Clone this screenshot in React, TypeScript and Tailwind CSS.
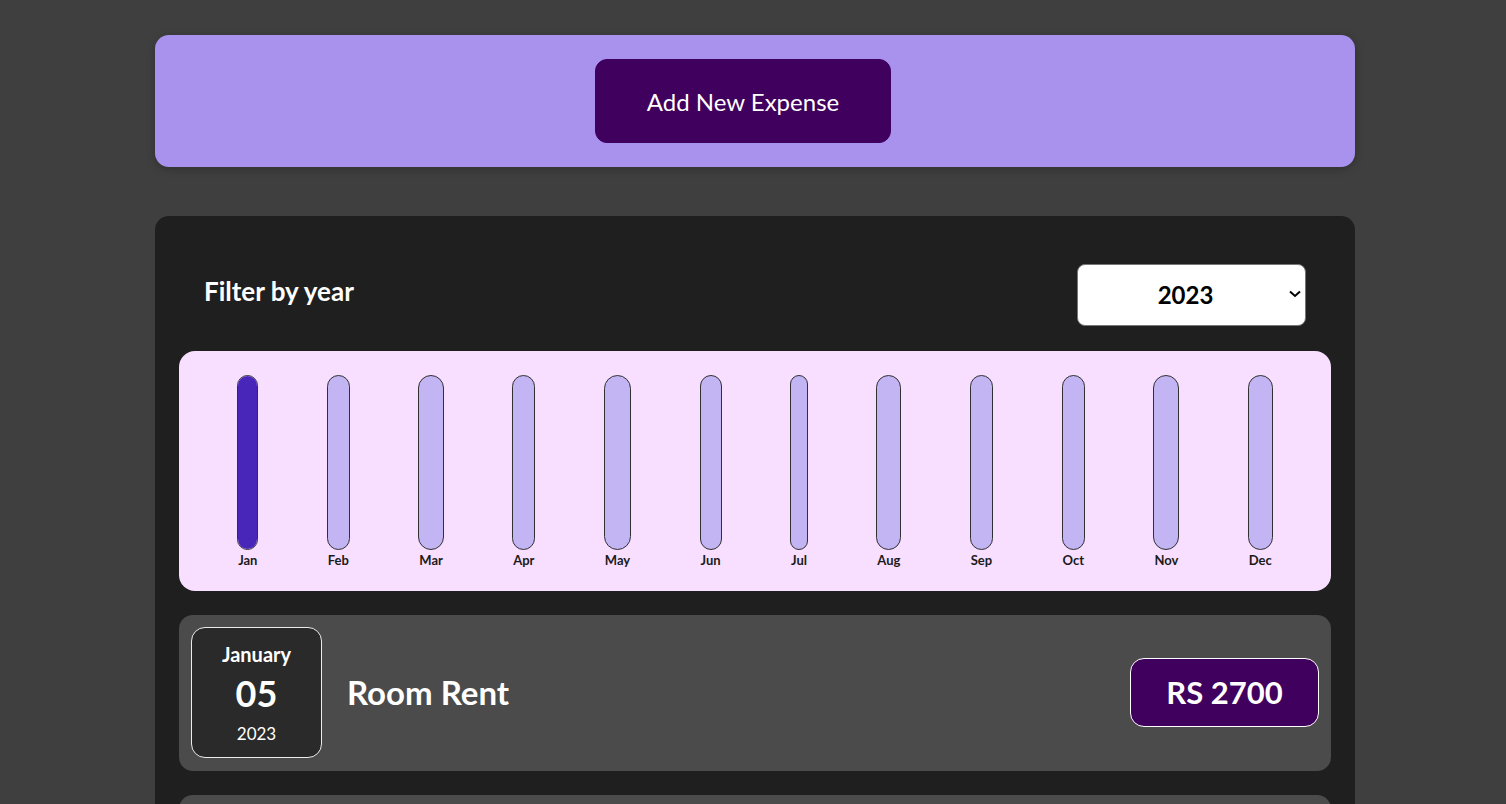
const months = ["Jan", "Feb", "Mar", "Apr", "May", "Jun", "Jul", "Aug", "Sep", "Oct", "Nov", "Dec"];
const values = [2700, 0, 0, 0, 0, 0, 0, 0, 0, 0, 0, 0];

function ChartBar({ label, fill }: { label: string; fill: number }) {
  return (
    <div className="flex flex-col items-center">
      <div className="flex h-[175px] w-full flex-col justify-end overflow-hidden rounded-full border border-[#313131] bg-[#c3b4f3]">
        <div className="w-full bg-[#4826b9]" style={{ height: `${fill}%` }} />
      </div>
      <div className="mt-[2px] px-[1px] text-[13px] font-bold leading-[16px] text-[#1a1a1a]">{label}</div>
    </div>
  );
}

function Chart() {
  const max = Math.max(...values);
  return (
    <div className="flex justify-around rounded-[16px] bg-[#f8dfff] px-6 pt-6 pb-[23px]">
      {months.map((m, i) => (
        <ChartBar key={m} label={m} fill={max ? (values[i] / max) * 100 : 0} />
      ))}
    </div>
  );
}

function ExpenseItem() {
  return (
    <div className="flex items-center rounded-[14px] bg-[#4b4b4b] px-3 pt-3 pb-[13px]">
      <div className="flex h-[131px] w-[131px] flex-col items-center rounded-[14px] border border-[#ececec] bg-[#2a2a2a] pt-[14px] text-white">
        <div className="text-[20px] font-bold leading-[24px]">January</div>
        <div className="mt-[7px] text-[36px] font-bold leading-[40px]">05</div>
        <div className="mt-[9px] text-[17px] leading-[24px]">2023</div>
      </div>
      <h2 className="ml-[25px] flex-1 text-[33px] font-bold text-white">Room Rent</h2>
      <div className="flex h-[69px] w-[189px] items-center justify-center rounded-[14px] border border-white bg-[#40005d] text-[31px] font-bold text-white">
        RS 2700
      </div>
    </div>
  );
}

export default function App() {
  return (
    <div className="min-h-[804px] bg-[#3f3f3f] pt-[35px]" style={{ fontFamily: "Lato, 'Open Sans', sans-serif" }}>
      <div className="ml-[155px] flex w-[1200px] justify-center rounded-[14px] bg-[#a892ee] py-6 shadow-[0_2px_8px_rgba(0,0,0,0.25)]">
        <button className="mr-6 h-[84px] w-[296px] rounded-[12px] border border-[#40005d] bg-[#40005d] pt-[2px] text-[24px] text-white">
          Add New Expense
        </button>
      </div>

      <div className="ml-[155px] mt-[49px] w-[1200px] rounded-[14px] bg-[#1f1f1f] px-6 pt-[48px] pb-6">
        <div className="flex items-center justify-between px-[25px]">
          <label className="-mt-[8px] text-[26px] font-bold text-white">Filter by year</label>
          <div className="relative">
            <select className="h-[62px] w-[229px] appearance-none rounded-[8px] border border-[#767676] bg-white pr-[12px] text-center text-[24px] font-bold text-black">
              <option>2023</option>
              <option>2022</option>
              <option>2021</option>
            </select>
            <svg className="pointer-events-none absolute right-[4px] top-[25px]" width="14" height="10" viewBox="0 0 14 10">
              <path d="M2 2.5 L7 7 L12 2.5" fill="none" stroke="black" strokeWidth="2" />
            </svg>
          </div>
        </div>

        <div className="mt-[25px]">
          <Chart />
        </div>

        <div className="mt-6 flex flex-col gap-6">
          <ExpenseItem />
          <ExpenseItem />
        </div>
      </div>
    </div>
  );
}
